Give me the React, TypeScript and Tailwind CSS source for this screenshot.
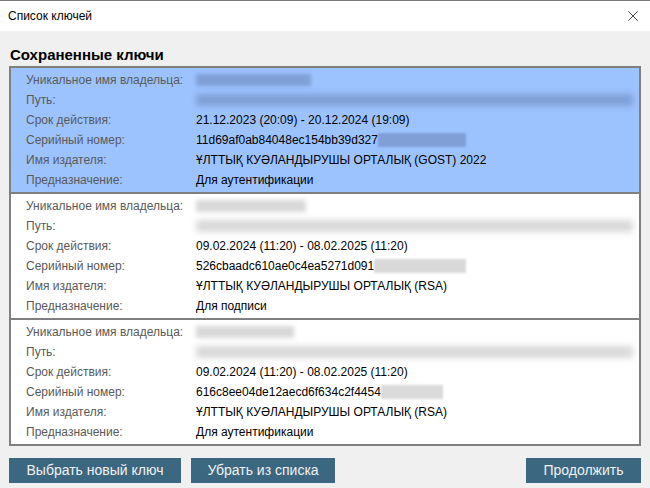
import { X } from "lucide-react";

type Key = {
  period: string;
  serial: string;
  issuer: string;
  purpose: string;
  nameW: number;
  serialW: number;
};

const keys: Key[] = [
  {
    period: "21.12.2023 (20:09) - 20.12.2024 (19:09)",
    serial: "11d69af0ab84048ec154bb39d327",
    issuer: "ҰЛТТЫҚ КУӘЛАНДЫРУШЫ ОРТАЛЫҚ (GOST) 2022",
    purpose: "Для аутентификации",
    nameW: 115,
    serialW: 88,
  },
  {
    period: "09.02.2024 (11:20) - 08.02.2025 (11:20)",
    serial: "526cbaadc610ae0c4ea5271d091",
    issuer: "ҰЛТТЫҚ КУӘЛАНДЫРУШЫ ОРТАЛЫҚ (RSA)",
    purpose: "Для подписи",
    nameW: 110,
    serialW: 92,
  },
  {
    period: "09.02.2024 (11:20) - 08.02.2025 (11:20)",
    serial: "616c8ee04de12aecd6f634c2f4454",
    issuer: "ҰЛТТЫҚ КУӘЛАНДЫРУШЫ ОРТАЛЫҚ (RSA)",
    purpose: "Для аутентификации",
    nameW: 98,
    serialW: 62,
  },
];

function Row({ label, children }: { label: string; children: React.ReactNode }) {
  return (
    <div className="flex h-5 items-center">
      <div className="w-[170px] shrink-0 text-[#595959]">{label}</div>
      <div className="flex min-w-0 flex-1 items-center text-black">{children}</div>
    </div>
  );
}

function KeyItem({ k, selected }: { k: Key; selected: boolean }) {
  const blur = selected ? "bg-[#7f9fd6]" : "bg-[#d9d9d9]";
  return (
    <div
      className={`flex flex-col py-[2px] pl-[15px] pr-[6px] ${selected ? "bg-[#9dc3ff]" : "bg-white"}`}
    >
      <Row label="Уникальное имя владельца:">
        <div className={`h-[12px] blur-[2px] ${blur}`} style={{ width: k.nameW }} />
      </Row>
      <Row label="Путь:">
        <div className={`h-[12px] w-full blur-[3px] ${blur}`} />
      </Row>
      <Row label="Срок действия:">{k.period}</Row>
      <Row label="Серийный номер:">
        <span>{k.serial}</span>
        <div className={`h-[14px] blur-[1px] ${blur}`} style={{ width: k.serialW }} />
      </Row>
      <Row label="Имя издателя:">{k.issuer}</Row>
      <Row label="Предназначение:">{k.purpose}</Row>
    </div>
  );
}

export default function App() {
  return (
    <div className="flex h-[488px] w-[650px] flex-col bg-[#f0f0f0] font-['Liberation_Sans',sans-serif]">
      <div className="flex h-[31px] items-center justify-between border-t border-[#7a7a7a] bg-white pl-[8px] pr-[8px] text-[12px] text-black">
        <span>Список ключей</span>
        <X className="h-[18px] w-[18px] text-[#222]" strokeWidth={1.1} />
      </div>
      <div className="flex flex-1 flex-col px-[9px]">
        <div className="mt-[12px] h-[23px] pl-[1px] text-[15px] font-bold leading-[23px] text-black">
          Сохраненные ключи
        </div>
        <div className="flex flex-col border-2 border-[#7f7f7f] bg-[#7f7f7f] text-[12px] leading-5">
          {keys.map((k, i) => (
            <div key={i} className={i > 0 ? "mt-[2px]" : ""}>
              <KeyItem k={k} selected={i === 0} />
            </div>
          ))}
        </div>
        <div className="mt-[12px] flex items-center gap-[10px] text-[14px] text-[#f2f2f2]">
          <button className="h-[25px] w-[172px] bg-[#3b6781]">Выбрать новый ключ</button>
          <button className="h-[25px] w-[144px] bg-[#3b6781]">Убрать из списка</button>
          <button className="ml-auto h-[25px] w-[115px] bg-[#3b6781]">Продолжить</button>
        </div>
      </div>
    </div>
  );
}
